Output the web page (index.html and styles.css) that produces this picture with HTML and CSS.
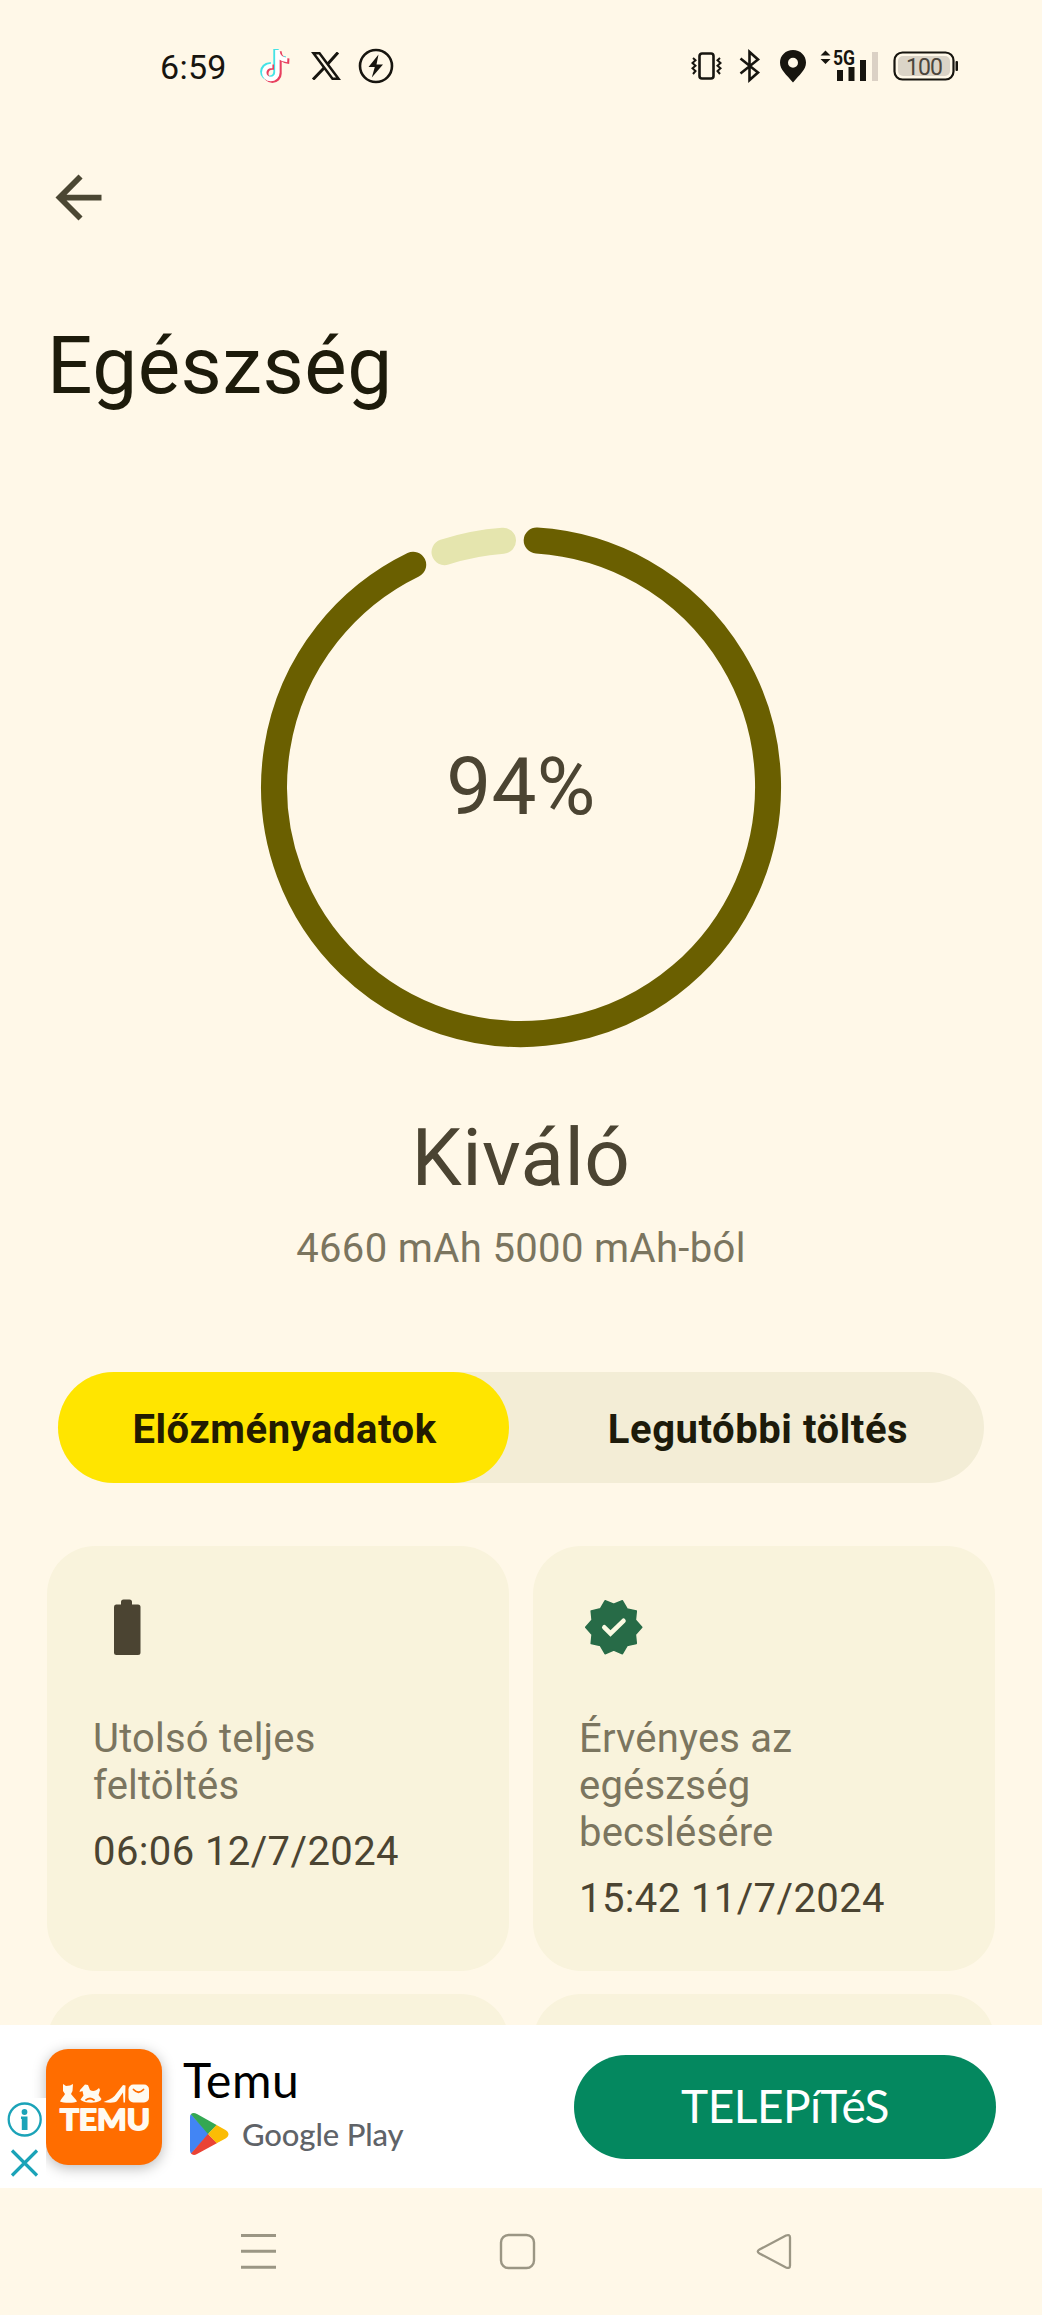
FILE: index.html
```html
<!DOCTYPE html>
<html lang="hu">
<head>
<meta charset="utf-8">
<title>Egészség</title>
<link rel="stylesheet" href="styles.css">
</head>
<body>
<div class="screen">
  <header class="status">
    <div class="status-left">
      <span class="clock">6:59</span>
      <svg class="i-tiktok" width="32" height="36" viewBox="0 0 32 36">
        <g fill="none" stroke-width="5.400">
          <path stroke="#45e3e6" d="M17 1V23.500a6.600 6.600 0 1 1-6.600-6.600h1.600M17 2c.5 5.500 4.500 8.700 9.800 9"/>
          <path stroke="#e8405f" d="M20 3.200V25.700a6.600 6.600 0 1 1-6.600-6.600h1.600M20 4.200c.5 5.500 4.500 8.700 10.300 9"/>
          <path stroke="#fff" stroke-width="4.500" d="M18.400 2V24.500a6.600 6.600 0 1 1-6.600-6.600h1.600M18.400 3c.5 5.500 4.500 8.700 9.900 9"/>
        </g>
      </svg>
      <svg class="i-x" width="30" height="28" viewBox="0 0 30 28">
        <path fill="none" stroke="#17150f" stroke-width="2.500" d="M2.500 1.300h6L27.500 26.700h-6z"/>
        <path fill="none" stroke="#17150f" stroke-width="3" d="M27 .5 16.500 12.300M13 16 2 27.500"/>
      </svg>
      <svg class="i-bolt" width="36" height="36" viewBox="0 0 36 36">
        <circle cx="18" cy="18" r="16" fill="none" stroke="#17150f" stroke-width="2.600"/>
        <path fill="#17150f" d="M20.500 6.500 10.500 19h6.300l-3 10.500L25 16.500h-6.500z"/>
      </svg>
    </div>
    <div class="status-right">
      <svg width="32" height="30" viewBox="0 0 32 30">
        <rect x="8.500" y="2.500" width="14" height="25" rx="2.500" fill="none" stroke="#17150f" stroke-width="2.600"/>
        <path fill="none" stroke="#17150f" stroke-width="2" d="m2 7 2.500 2.300L1.500 12l3 2.700-3 2.600 3 2.700L2 23M29 7l-2.500 2.300 3 2.700-3 2.700 3 2.600-3 2.700 2.500 3"/>
      </svg>
      <svg class="i-bt" width="22" height="34" viewBox="0 0 22 34">
        <path fill="none" stroke="#17150f" stroke-width="2.600" d="m1.500 9.500 17.500 14L10.500 31V3L19 10.500l-17.500 14"/>
      </svg>
      <svg class="i-pin" width="28" height="34" viewBox="0 0 28 34">
        <path fill="#17150f" fill-rule="evenodd" d="M14 1C6.700 1 1 6.500 1 13.500 1 21 7.500 25.500 14 33.500 20.500 25.500 27 21 27 13.500 27 6.500 21.300 1 14 1zm0 7.700a5 5 0 1 1 0 10 5 5 0 0 1 0-10z"/>
      </svg>
      <svg class="i-signal" width="60" height="50" viewBox="0 -8 60 50">
        <path fill="#17150f" d="M.5 6.500 5.500 1.500l5 5zM.5 10 5.500 15l5-5z"/>
        <text class="net" x="13" y="15.500" textLength="22" lengthAdjust="spacingAndGlyphs">5G</text>
        <path fill="#17150f" d="M17 21h6v11h-6zM28.500 18h6v14h-6zM40 11h6v21h-6z"/>
        <path fill="#dbd1c5" d="M52 3h6v29h-6z"/>
      </svg>
      <svg class="i-bat" width="66" height="32" viewBox="0 0 66 32">
        <rect x="1.500" y="2.500" width="59" height="27" rx="8" fill="none" stroke="#17150f" stroke-width="2.200"/>
        <rect x="5" y="6" width="52" height="20" rx="5" fill="#dbd4c7"/>
        <rect x="62.500" y="11" width="2.500" height="10" rx="1" fill="#17150f"/>
        <text class="pct" x="13" y="24.500" textLength="37">100</text>
      </svg>
    </div>
  </header>

  <nav class="topbar">
    <svg width="69" height="69" viewBox="0 0 24 24"><path fill="#4b4733" d="M20 11H7.830l5.590-5.590L12 4l-8 8 8 8 1.410-1.410L7.830 13H20v-2z"/></svg>
  </nav>

  <h1 class="title">Egészség</h1>

  <section class="health">
    <div class="gauge">
      <svg width="522" height="522" viewBox="-261 -261 522 522">
        <g fill="none" stroke-width="26" stroke-linecap="round">
          <path stroke="#6a5f00" d="M15.700-246.500A247 247 0 1 1-107.800-222.200"/>
          <path stroke="#e5e5ae" d="M-76.500-234.900A247 247 0 0 1-18-246.300"/>
        </g>
      </svg>
      <span class="gauge-value">94%</span>
    </div>
    <div class="grade">Kiváló</div>
    <div class="capacity">4660 mAh 5000 mAh-ból</div>
  </section>

  <div class="tabs">
    <div class="tab active">Előzményadatok</div>
    <div class="tab">Legutóbbi töltés</div>
  </div>

  <main class="cards">
    <article class="card">
      <svg class="card-icon" width="70" height="70" viewBox="0 0 70 70"><path fill="#4b4432" d="M23 12.500h5V10q0-2.500 2.500-2.500h6Q39 7.500 39 10v2.500h6q2.500 0 2.500 2.500v45.500q0 2.500-2.500 2.500H23.500q-2.500 0-2.500-2.500V15q0-2.500 2-2.500z"/></svg>
      <div class="label">Utolsó teljes<br>feltöltés</div>
      <div class="value">06:06 12/7/2024</div>
    </article>
    <article class="card">
      <svg class="card-icon" width="70" height="70" viewBox="0 0 70 70">
        <path transform="translate(3.300 3.800) scale(2.620)" fill="#276b47" stroke="#276b47" stroke-width=".6" stroke-linejoin="round" d="M22.700 12l-2.440-2.790.34-3.390-3.510-.82L15.300 1.900 12 3.260 8.700 1.900 6.910 4.990 3.400 5.800l.34 3.400L1.300 12l2.440 2.790-.34 3.400 3.510.82L8.700 22.100l3.300-1.370 3.300 1.360 1.790-3.090 3.510-.82-.34-3.390z"/>
        <path fill="none" stroke="#fbfae2" stroke-width="4.600" stroke-linecap="round" d="M25.300 35.300l6.200 6.200L44.500 28.800"/>
      </svg>
      <div class="label">Érvényes az<br>egészség<br>becslésére</div>
      <div class="value">15:42 11/7/2024</div>
    </article>
    <article class="card"></article>
    <article class="card"></article>
  </main>

  <aside class="ad">
    <div class="app-icon">
      <svg width="116" height="116" viewBox="0 0 116 116">
        <g fill="#fffaf0">
          <path d="M17 35l3 2 4-.5 3-1.500-.5 7-1.500 3c2 2.500 5 5.500 6 7.500-2 1.700-14 1.700-17 0 1-3 4-5 5-7.500L17 42z"/>
          <path d="M34 41l5-5.500 3 .5 2 5c3 2 6 1 9-2l1 2-1.500 5 3 4-1 1.500c-5 3-14 3-19 0l-1-1 3-4-1-4.500-3 1z"/>
          <path d="M57.500 53c4-2 8-3 11-6l8.500-11 2.500.5-.5 17h-1.500l-.5-10-6 8.500c-1.500 2-8 2-13.500 1z"/>
          <rect x="82.500" y="35.500" width="20.500" height="18" rx="5"/>
        </g>
        <path d="M40 51q4-3 8 0M87.500 40.500q5 5.500 10 0" fill="none" stroke="#ff6d00" stroke-width="1.800" stroke-linecap="round"/>
        <text class="temu" x="14" y="80.500" textLength="90" lengthAdjust="spacingAndGlyphs">TEMU</text>
      </svg>
    </div>
    <div class="ad-text">
      <div class="ad-name">Temu</div>
      <div class="store">
        <svg width="40" height="44" viewBox="0 0 40 44">
          <defs><clipPath id="play"><path d="M1 5C1 1 4.500 0 8 2L36.500 18c4 2.500 4 6 0 8.500L8 42c-3.500 2-7 .5-7-3.500z"/></clipPath></defs>
          <g clip-path="url(#play)">
            <path fill="#4285f4" d="M0 0v44l20-22z"/>
            <path fill="#34a853" d="M0 0 19 22 28 13V0z"/>
            <path fill="#ea4335" d="M0 44 19 22 28 31V44z"/>
            <path fill="#fbbc04" d="M28 12.500 19 22l9 9.500L42 25V18z"/>
          </g>
        </svg>
        <span>Google Play</span>
      </div>
    </div>
    <div class="install">TELEPíTéS</div>
    <div class="ad-controls">
      <svg width="46" height="90" viewBox="0 0 46 90">
        <circle cx="24.700" cy="21.500" r="16" fill="none" stroke="#1ba3b8" stroke-width="2.300"/>
        <circle cx="24.500" cy="14" r="2.900" fill="#1ba3b8"/>
        <path fill="#1ba3b8" d="M21 18.500h6.500V32H21.800V21H21z"/>
        <path stroke="#1ba3b8" stroke-width="3.200" d="M12 52.500 37 77.500M37 52.500 12 77.500"/>
      </svg>
    </div>
  </aside>

  <footer class="navbar">
    <svg width="37" height="37" viewBox="0 0 37 37"><path stroke="#9b9684" stroke-width="2.900" d="M1 2.500h35M1 18.300h35M1 34.200h35"/></svg>
    <svg class="nav-home" width="37" height="37" viewBox="0 0 37 37"><rect x="2" y="2" width="33" height="33" rx="7.500" fill="none" stroke="#9b9684" stroke-width="2.400"/></svg>
    <svg class="nav-back" width="37" height="37" viewBox="0 0 37 37"><path fill="none" stroke="#9b9684" stroke-width="2.300" stroke-linejoin="round" d="M3.500 16.500 30 2.500q4-1.500 4 2v28q0 3.500-4 2L3.500 20.500q-3.500-2 0-4z"/></svg>
  </footer>
</div>
</body>
</html>
```
FILE: styles.css
```css
* { box-sizing: border-box; }
body { margin: 0; background: #fff8e8; font-family: Roboto, sans-serif; }
svg { display: block; flex: none; }
.screen { width: 1042px; height: 2315px; overflow: hidden; display: flex; flex-direction: column; color: #4b4432; }

.status { height: 132px; flex: none; display: flex; justify-content: space-between; align-items: center; padding: 0 83px 0 160px; }
.status-left, .status-right { display: flex; align-items: center; }
.clock { width: 99px; font-size: 34px; line-height: 40px; letter-spacing: .3px; padding-top: 1px; color: #17150f; }
.i-x { margin-left: 20px; }
.i-bolt { margin-left: 17px; }
.i-bt { margin-left: 16px; }
.i-pin { margin-left: 18px; }
.i-signal { margin-left: 13px; }
.i-bat { margin-left: 13px; }
.net { font: 700 20px Roboto, sans-serif; fill: #17150f; }
.pct { font: 400 23px Roboto, sans-serif; fill: #4b463d; }

.topbar { height: 130px; flex: none; display: flex; align-items: center; padding-left: 44px; }
.title { margin: 56px 0 1px; padding-left: 47px; flex: none; font-size: 80px; line-height: 96px; letter-spacing: .5px; font-weight: 400; color: #1d1b0b; }

.health { flex: none; margin-top: 111px; display: flex; flex-direction: column; align-items: center; }
.gauge { display: grid; place-items: center; }
.gauge > * { grid-area: 1 / 1; }
.gauge-value { font-size: 80px; line-height: 96px; letter-spacing: .4px; }
.grade { margin-top: 62px; font-size: 80px; line-height: 96px; letter-spacing: .4px; }
.capacity { margin-top: 19px; font-size: 40px; line-height: 48px; letter-spacing: .36px; color: #7b755f; }

.tabs { flex: none; margin: 99px 58px 0; height: 111px; border-radius: 56px; background: #f3edd6; display: flex; }
.tab { flex: 1; display: flex; align-items: center; justify-content: center; font-size: 40px; font-weight: 700; letter-spacing: .55px; color: #1d1b0b; padding: 3px 0 0 23px; }
.tab.active { flex: 0 0 451px; padding-left: 2px; border-radius: 56px; background: #ffe500; color: #221b00; }

.cards { flex: none; height: 479px; margin-top: 63px; padding: 0 47px; display: grid; grid-template-columns: 462px 462px; grid-template-rows: 425px 425px; gap: 23px 24px; overflow: hidden; }
.card { background: #f9f3dc; border-radius: 48px; padding: 46px; font-size: 40px; line-height: 47px; letter-spacing: .2px; }
.label { margin-top: 53px; color: #7b755f; }
.value { margin-top: 19px; letter-spacing: .4px; }

.ad { position: relative; flex: none; height: 163px; background: #fff; display: flex; align-items: center; padding: 0 46px; }
.app-icon { width: 116px; height: 116px; border-radius: 22px; background: #ff6d00; box-shadow: 0 3px 14px rgba(0, 0, 0, .28); }
.temu { font: 700 29px Lato, sans-serif; fill: #fffaf0; stroke: #fffaf0; stroke-width: 1.8; stroke-linejoin: round; }
.ad-text { margin-left: 21px; flex: 1; color: #000; font-family: Lato, sans-serif; }
.ad-name { margin-top: -5px; font-size: 48px; line-height: 56px; letter-spacing: .6px; }
.store { display: flex; align-items: center; gap: 13px; margin-top: 4px; padding-left: 6px; font-size: 31px; line-height: 44px; font-weight: 500; letter-spacing: -.1px; color: #5f6368; }
.install { width: 422px; height: 104px; border-radius: 52px; background: #04885f; color: #fff; font: 46px/101px Lato, sans-serif; letter-spacing: -.5px; text-align: center; }
.ad-controls { position: absolute; left: 0; top: 73px; width: 46px; height: 90px; background: #fff; }

.navbar { flex: none; height: 127px; display: flex; align-items: center; padding-left: 240px; }
.nav-home { margin-left: 222px; }
.nav-back { margin-left: 220px; }
```
